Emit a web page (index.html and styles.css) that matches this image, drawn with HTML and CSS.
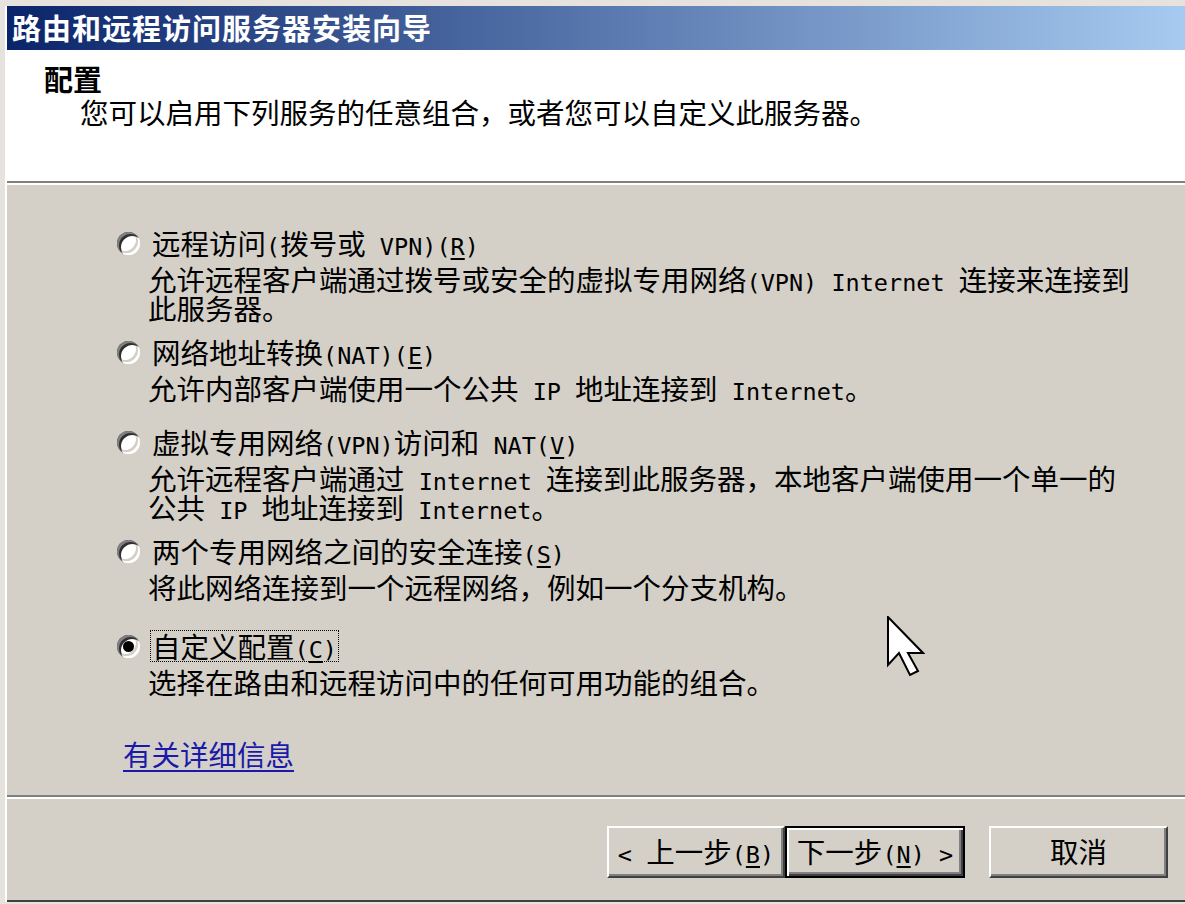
FILE: index.html
```html
<!DOCTYPE html>
<html lang="zh-CN">
<head>
    <meta charset="UTF-8">
    <meta name="viewport" content="width=device-width, initial-scale=1.0">
    <title>路由和远程访问服务器安装向导</title>
    <link rel="stylesheet" href="styles.css">
</head>
<body>
    <div class="window">
        <div class="titlebar">路由和远程访问服务器安装向导</div>

        <div class="header">
            <div class="header-title">配置</div>
            <div class="header-sub">您可以启用下列服务的任意组合，或者您可以自定义此服务器。</div>
        </div>

        <div class="content">
            <div class="option">
                <span class="radio"></span>
                <span class="label">远程访问<span class="en">(</span>拨号或<span class="en"> VPN)(<u>R</u>)</span></span>
                <div class="desc">允许远程客户端通过拨号或安全的虚拟专用网络<span class="en">(VPN) Internet </span>连接来连接到<br>此服务器。</div>
            </div>
            <div class="option">
                <span class="radio"></span>
                <span class="label">网络地址转换<span class="en">(NAT)(<u>E</u>)</span></span>
                <div class="desc">允许内部客户端使用一个公共<span class="en"> IP </span>地址连接到<span class="en"> Internet</span>。</div>
            </div>
            <div class="option spaced">
                <span class="radio"></span>
                <span class="label">虚拟专用网络<span class="en">(VPN)</span>访问和<span class="en"> NAT(<u>V</u>)</span></span>
                <div class="desc">允许远程客户端通过<span class="en"> Internet </span>连接到此服务器，本地客户端使用一个单一的<br>公共<span class="en"> IP </span>地址连接到<span class="en"> Internet</span>。</div>
            </div>
            <div class="option">
                <span class="radio"></span>
                <span class="label">两个专用网络之间的安全连接<span class="en">(<u>S</u>)</span></span>
                <div class="desc">将此网络连接到一个远程网络，例如一个分支机构。</div>
            </div>
            <div class="option spaced-lg">
                <span class="radio checked"></span>
                <span class="label focused">自定义配置<span class="en">(<u>C</u>)</span></span>
                <div class="desc">选择在路由和远程访问中的任何可用功能的组合。</div>
            </div>

            <a class="more-link" href="#">有关详细信息</a>
        </div>

        <div class="footer">
            <button class="btn btn-back"><span class="en">&lt; </span>上一步<span class="en">(<u>B</u>)</span></button>
            <button class="btn btn-next default">下一步<span class="en">(<u>N</u>) &gt;</span></button>
            <button class="btn btn-cancel">取消</button>
        </div>
    </div>

    <svg class="cursor" width="38" height="62" viewBox="0 0 38 62">
        <polygon points="1,1 1,49 12,37 23,59 31,55 21,37 36,37" fill="#fff" stroke="#000" stroke-width="2" stroke-linejoin="miter"/>
    </svg>
</body>
</html>
```

FILE: styles.css
```css
body {
    margin: 0;
    padding-top: 6px;
    height: 898px;
    overflow: hidden;
    background: #e6e3de;
    font-family: "Noto Sans CJK SC", sans-serif;
    font-size: 28.5px;
    color: #000;
}
.en {
    font-family: "DejaVu Sans Mono", monospace;
    font-size: 23.5px;
    line-height: 20px;
}
u {
    text-decoration-thickness: 2px;
    text-underline-offset: 3px;
}
.window {
    margin-left: 7px;
    background: #d4d0c8;
    box-shadow: -2px 0 0 #fff;
    height: 896px;
    display: flex;
    flex-direction: column;
}
.titlebar {
    height: 44px;
    line-height: 42px;
    padding-left: 5px;
    background: linear-gradient(to right, #0a246a, #a6caf0);
    color: #fff;
    font-weight: bold;
    font-size: 29px;
    letter-spacing: 1px;
    white-space: nowrap;
}
.header {
    box-sizing: border-box;
    height: 133px;
    padding: 12px 0 0 37px;
    background: #fff;
    border-bottom: 2px solid #808080;
}
.header-title {
    font-weight: bold;
    font-size: 29px;
    line-height: 32px;
}
.header-sub {
    margin: 2px 0 0 36px;
    line-height: 32px;
    white-space: nowrap;
}
.content {
    box-sizing: border-box;
    height: 612px;
    padding: 42px 0 0 110px;
    border-top: 2px solid #fff;
    display: flex;
    flex-direction: column;
    gap: 14px;
}
.option {
    display: grid;
    grid-template-columns: 23px 1fr;
    column-gap: 8px;
    align-items: center;
}
.option.spaced {
    margin-top: 10px;
}
.option.spaced-lg {
    margin-top: 15px;
}
.radio {
    position: relative;
    width: 23px;
    height: 23px;
    border-radius: 50%;
    background: #fff;
    box-shadow: inset 2px 2px 0 #808080, inset 4px 4px 0 #303030,
        inset -2px -2px 0 #fff, inset -4px -4px 0 #d4d0c8;
}
.radio.checked::after {
    content: "";
    position: absolute;
    left: 6px;
    top: 6px;
    width: 11px;
    height: 11px;
    border-radius: 50%;
    background: #000;
}
.label {
    justify-self: start;
    margin-left: 2px;
    padding: 0 1px;
    border: 1px dotted transparent;
    line-height: 30px;
    white-space: nowrap;
}
.label.focused {
    border-color: #000;
}
.desc {
    grid-column: 2;
    margin-top: 5px;
    line-height: 29px;
    white-space: nowrap;
}
.more-link {
    align-self: flex-start;
    margin: 29px 0 0 6px;
    line-height: 30px;
    color: #1a1aaa;
    text-decoration-thickness: 2px;
    text-underline-offset: 4px;
}
.footer {
    flex: 1;
    display: flex;
    justify-content: flex-end;
    align-items: flex-start;
    padding: 29px 17px 0 0;
    border-top: 2px solid #808080;
    border-bottom: 2px solid #404040;
    box-shadow: inset 0 2px 0 #fff;
}
.btn {
    box-sizing: border-box;
    height: 52px;
    width: 178px;
    padding: 0 0 3px;
    background: #d4d0c8;
    font-family: inherit;
    font-size: 28.5px;
    color: #000;
    border: 2px solid;
    border-color: #fff #404040 #404040 #fff;
    box-shadow: inset -2px -2px 0 #808080;
    white-space: nowrap;
}
.btn.default {
    width: 180px;
    border-color: #000;
    box-shadow: inset 2px 2px 0 #fff, inset -2px -2px 0 #404040, inset -4px -4px 0 #808080;
}
.btn-cancel {
    width: 179px;
    margin-left: 24px;
}
.cursor {
    position: absolute;
    left: 887px;
    top: 616px;
}
```
